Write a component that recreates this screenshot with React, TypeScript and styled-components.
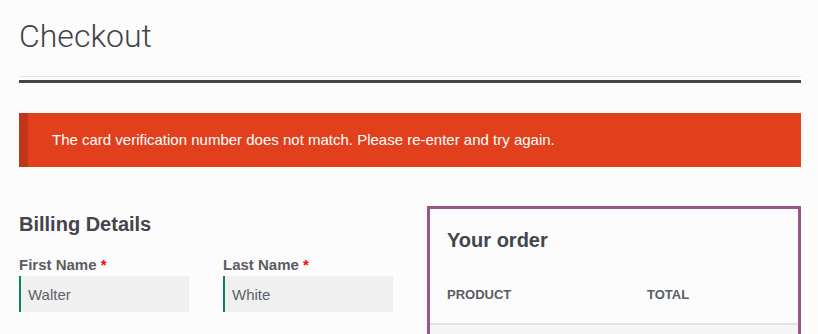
import styled, { createGlobalStyle } from 'styled-components'

const GlobalStyle = createGlobalStyle`
    html, body {
        margin: 0;
        padding: 0;
        background: #fcfcfc;
        overflow: hidden;
    }
    body {
        font-family: "Liberation Sans", Arial, sans-serif;
        color: #43454b;
    }
`

type Field = {
    label: string
    value: string
}

const fields: Field[] = [
    { label: 'First Name', value: 'Walter' },
    { label: 'Last Name', value: 'White' },
]

const App = () => {
    return (
        <>
            <GlobalStyle />
            <Page>
                <PageHeader>
                    <PageTitle>Checkout</PageTitle>
                </PageHeader>
                <HeaderRule />
                <ErrorNotice>
                    The card verification number does not match. Please re-enter and try again.
                </ErrorNotice>
                <Columns>
                    <Billing>
                        <SectionTitle>Billing Details</SectionTitle>
                        <FieldRow>
                            {fields.map((field) => (
                                <FieldBox key={field.label}>
                                    <FieldLabel>
                                        {field.label} <Required>*</Required>
                                    </FieldLabel>
                                    <TextInput defaultValue={field.value} />
                                </FieldBox>
                            ))}
                        </FieldRow>
                    </Billing>
                    <OrderBox>
                        <OrderTitle>Your order</OrderTitle>
                        <OrderHead>
                            <HeadCell>Product</HeadCell>
                            <HeadCell>Total</HeadCell>
                        </OrderHead>
                        <OrderRow />
                    </OrderBox>
                </Columns>
            </Page>
        </>
    )
}

const Page = styled.div`
    width: 782px;
    margin-left: 19px;
`

const PageHeader = styled.header`
    padding-top: 17px;
    padding-bottom: 21px;
    border-bottom: 1px solid #e3e3e3;
`

const PageTitle = styled.h1`
    margin: 0;
    font-family: Roboto, "Liberation Sans", sans-serif;
    font-weight: 300;
    font-size: 32px;
    line-height: 38px;
    color: #43454b;
`

const HeaderRule = styled.div`
    margin-top: 3px;
    height: 3px;
    background: #43454b;
`

const ErrorNotice = styled.div`
    margin-top: 30px;
    height: 54px;
    box-sizing: border-box;
    display: flex;
    align-items: center;
    padding-left: 24px;
    background: #e2401c;
    border-left: 9px solid #c03618;
    color: #ffffff;
    font-size: 15px;
    line-height: 22px;
`

const Columns = styled.div`
    margin-top: 39px;
    display: grid;
    grid-template-columns: 374px 374px;
    column-gap: 34px;
    align-items: start;
`

const Billing = styled.section`
    padding-top: 6px;
`

const SectionTitle = styled.h3`
    margin: 0;
    font-size: 20px;
    line-height: 24px;
    font-weight: 700;
    color: #43454b;
`

const FieldRow = styled.div`
    margin-top: 19px;
    display: grid;
    grid-template-columns: 170px 170px;
    column-gap: 34px;
`

const FieldBox = styled.div`
    display: flex;
    flex-direction: column;
    gap: 1px;
`

const FieldLabel = styled.label`
    font-size: 15px;
    line-height: 20px;
    font-weight: 700;
    color: #5a5d64;
`

const Required = styled.abbr`
    color: #ff0000;
    text-decoration: none;
`

const TextInput = styled.input`
    box-sizing: border-box;
    width: 170px;
    height: 36px;
    padding: 0 7px;
    border: 0;
    border-left: 2px solid #0f834d;
    background: #f0f0f0;
    font-family: "Liberation Sans", Arial, sans-serif;
    font-size: 15px;
    color: #5e6168;
    outline: none;
`

const OrderBox = styled.section`
    box-sizing: border-box;
    height: 200px;
    border: 3px solid #96588a;
    padding-top: 19px;
`

const OrderTitle = styled.h3`
    margin: 0 17px;
    font-size: 20px;
    line-height: 24px;
    font-weight: 700;
    color: #43454b;
`

const OrderHead = styled.div`
    margin-top: 23px;
    display: grid;
    grid-template-columns: 200px 1fr;
    padding: 11px 17px 19px;
`

const HeadCell = styled.div`
    font-size: 13px;
    line-height: 18px;
    font-weight: 700;
    text-transform: uppercase;
    color: #5a5d64;
`

const OrderRow = styled.div`
    height: 80px;
    border-top: 2px solid #e1e1e1;
    background: #f5f5f5;
`

export default App
